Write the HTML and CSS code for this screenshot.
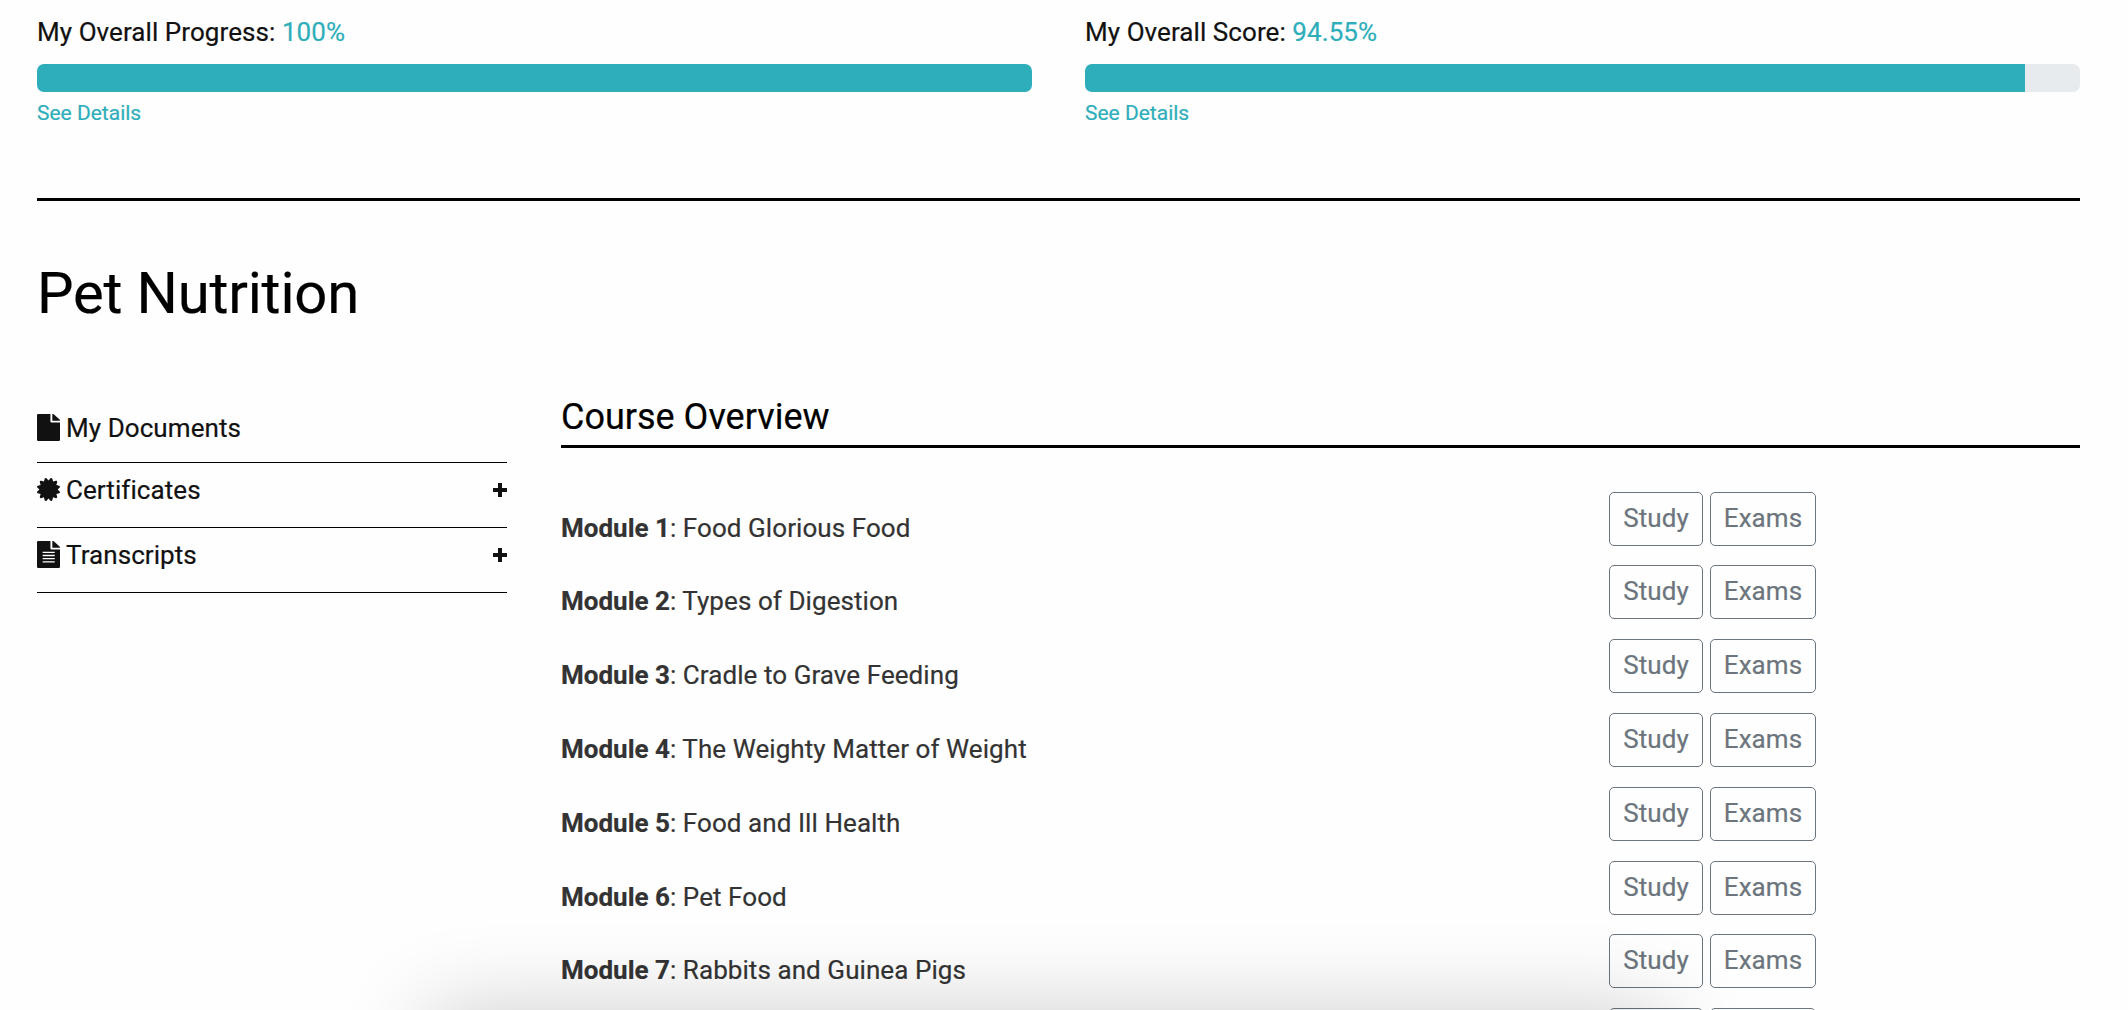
FILE: index.html
```html
<!DOCTYPE html>
<html lang="en">
<head>
	<meta charset="utf-8">
	<title>Pet Nutrition</title>
	<link rel="stylesheet" href="styles.css">
</head>
<body>
<div class="container">
	<!-- progress / score -->
	<div class="stats">
		<div class="stat">
			<p class="stat-title">My Overall Progress: <span>100%</span></p>
			<div class="progress"><div class="progress-bar" style="width: 100%"></div></div>
			<a class="details" href="#">See Details</a>
		</div>
		<div class="stat">
			<p class="stat-title">My Overall Score: <span>94.55%</span></p>
			<div class="progress"><div class="progress-bar" style="width: 94.5%"></div></div>
			<a class="details" href="#">See Details</a>
		</div>
	</div>

	<h1>Pet Nutrition</h1>

	<div class="row">
		<ul class="sidebar">
			<li>
				<svg class="icon file" viewBox="0 0 384 512" preserveAspectRatio="none"><path d="M224 136V0H24C10.700 0 0 10.700 0 24v464c0 13.300 10.700 24 24 24h336c13.300 0 24-10.700 24-24V160H248c-13.200 0-24-10.800-24-24zm160-14.100v6.100H256V0h6.100c6.400 0 12.500 2.500 17 7l97.900 98c4.500 4.500 7 10.600 7 16.900z"/></svg>
				<span>My Documents</span>
			</li>
			<li>
				<svg class="icon cert" viewBox="0 0 512 512"><path d="M458.622 255.920l45.985-45.005c13.708-12.977 7.316-36.039-10.664-40.339l-62.650-15.990 17.661-62.015c4.991-17.838-11.829-34.663-29.661-29.671l-61.994 17.667-15.984-62.671C337.085.197 313.765-6.276 300.990 7.228L256 53.570 211.011 7.229c-12.630-13.351-36.047-7.234-40.325 10.668l-15.984 62.671-61.995-17.667C74.870 57.907 58.056 74.738 63.046 92.572l17.661 62.015-62.650 15.990C.069 174.878-6.310 197.944 7.392 210.915l45.985 45.005-45.985 45.004c-13.708 12.977-7.316 36.039 10.664 40.339l62.650 15.990-17.661 62.015c-4.991 17.838 11.829 34.663 29.661 29.671l61.994-17.667 15.984 62.671c4.439 18.575 27.696 24.018 40.325 10.668L256 458.610l44.989 46.001c12.500 13.488 35.987 7.486 40.325-10.668l15.984-62.671 61.994 17.667c17.836 4.994 34.651-11.837 29.661-29.671l-17.661-62.015 62.650-15.990c17.987-4.302 24.366-27.367 10.664-40.339l-45.984-45.004z"/></svg>
				<span>Certificates</span>
				<svg class="plus" viewBox="0 0 14 14"><path d="M5 0h4v5h5v4H9v5H5V9H0V5h5z"/></svg>
			</li>
			<li>
				<svg class="icon file" viewBox="0 0 384 512" preserveAspectRatio="none"><path d="M224 136V0H24C10.700 0 0 10.700 0 24v464c0 13.300 10.700 24 24 24h336c13.300 0 24-10.700 24-24V160H248c-13.200 0-24-10.800-24-24zm160-14.100v6.100H256V0h6.100c6.400 0 12.500 2.500 17 7l97.900 98c4.500 4.500 7 10.600 7 16.900z"/><path class="line" d="M94 214h202M94 275h202M94 336h202M94 397h202"/></svg>
				<span>Transcripts</span>
				<svg class="plus" viewBox="0 0 14 14"><path d="M5 0h4v5h5v4H9v5H5V9H0V5h5z"/></svg>
			</li>
		</ul>

		<div class="course">
			<h2>Course Overview</h2>
			<ul class="modules">
				<li><p><b>Module 1</b>: Food Glorious Food</p><a class="btn" href="#">Study</a><a class="btn exams" href="#">Exams</a></li>
				<li><p><b>Module 2</b>: Types of Digestion</p><a class="btn" href="#">Study</a><a class="btn exams" href="#">Exams</a></li>
				<li><p><b>Module 3</b>: Cradle to Grave Feeding</p><a class="btn" href="#">Study</a><a class="btn exams" href="#">Exams</a></li>
				<li><p><b>Module 4</b>: The Weighty Matter of Weight</p><a class="btn" href="#">Study</a><a class="btn exams" href="#">Exams</a></li>
				<li><p><b>Module 5</b>: Food and Ill Health</p><a class="btn" href="#">Study</a><a class="btn exams" href="#">Exams</a></li>
				<li><p><b>Module 6</b>: Pet Food</p><a class="btn" href="#">Study</a><a class="btn exams" href="#">Exams</a></li>
				<li><p><b>Module 7</b>: Rabbits and Guinea Pigs</p><a class="btn" href="#">Study</a><a class="btn exams" href="#">Exams</a></li>
				<li><p></p><a class="btn" href="#"></a><a class="btn exams" href="#"></a></li>
			</ul>
		</div>
	</div>
</div>
<div class="shadow"></div>
</body>
</html>
```
FILE: styles.css
```css
*{margin: 0;padding: 0;box-sizing: border-box;}
html,body{height: 1010px;overflow: hidden;}
body{
	background: #fefefe;
	color: #111;
	font-family: Roboto, "Liberation Sans", sans-serif;
	font-size: 26px;
	letter-spacing: .07px;
	-webkit-text-stroke: .2px;
}
ul{list-style: none;}
a{text-decoration: none;}

.container{padding: 12px 48px 0 37px;}

/* progress */
.stats{
	display: flex;
	gap: 53px;
	height: 189px;
	border-bottom: 3px solid #000;
}
.stat{flex: 1;}
.stat-title{height: 52px;line-height: 40px;}
.stat-title span{color: #2eaeba;}
.progress{
	height: 28px;
	border-radius: 7px;
	background: #e8ebee;
	overflow: hidden;
}
.progress-bar{height: 28px;background: #2eaeba;}
.details{
	display: block;
	color: #2eaeba;
	font-size: 21px;
	letter-spacing: 0;
	line-height: 43px;
}

h1{
	margin-top: 52px;
	height: 80px;
	color: #000;
	font-size: 58px;
	font-weight: 400;
	letter-spacing: -.2px;
	line-height: 80px;
}

.row{display: flex;gap: 54px;margin-top: 61px;}

/* sidebar */
.sidebar{width: 470px;padding-top: 4px;}
.sidebar li{
	display: flex;
	align-items: center;
	height: 65px;
	padding-bottom: 11px;
	border-bottom: 1px solid #000;
}
.sidebar li:first-child{padding-bottom: 5px;}
.icon{width: 23px;margin-right: 6px;fill: #111;}
.file{height: 27px;}
.cert{height: 23px;}
.line{stroke: #fefefe;stroke-width: 24;}
.plus{width: 14px;height: 14px;margin-left: auto;fill: #111;}

/* modules */
.course{flex: 1;}
h2{
	height: 54px;
	border-bottom: 3px solid #000;
	color: #000;
	font-size: 36px;
	font-weight: 400;
	letter-spacing: 0;
	line-height: 47px;
}
.modules{padding-top: 43.6px;}
.modules li{display: flex;height: 73.8px;}
.modules p{width: 1048px;color: #333;line-height: 72px;}
.modules b{letter-spacing: 0;}
.btn{
	width: 94px;
	height: 54px;
	border: 1px solid #6c757d;
	border-radius: 5px;
	color: #6c757d;
	line-height: 51px;
	text-align: center;
}
.exams{width: 106px;margin-left: 7px;}

/* window shadow along the bottom edge */
.shadow{
	position: fixed;
	top: 1012px;
	left: 428px;
	width: 1236px;
	height: 300px;
	box-shadow: 0 0 84px rgba(0,0,0,.2);
}
```
